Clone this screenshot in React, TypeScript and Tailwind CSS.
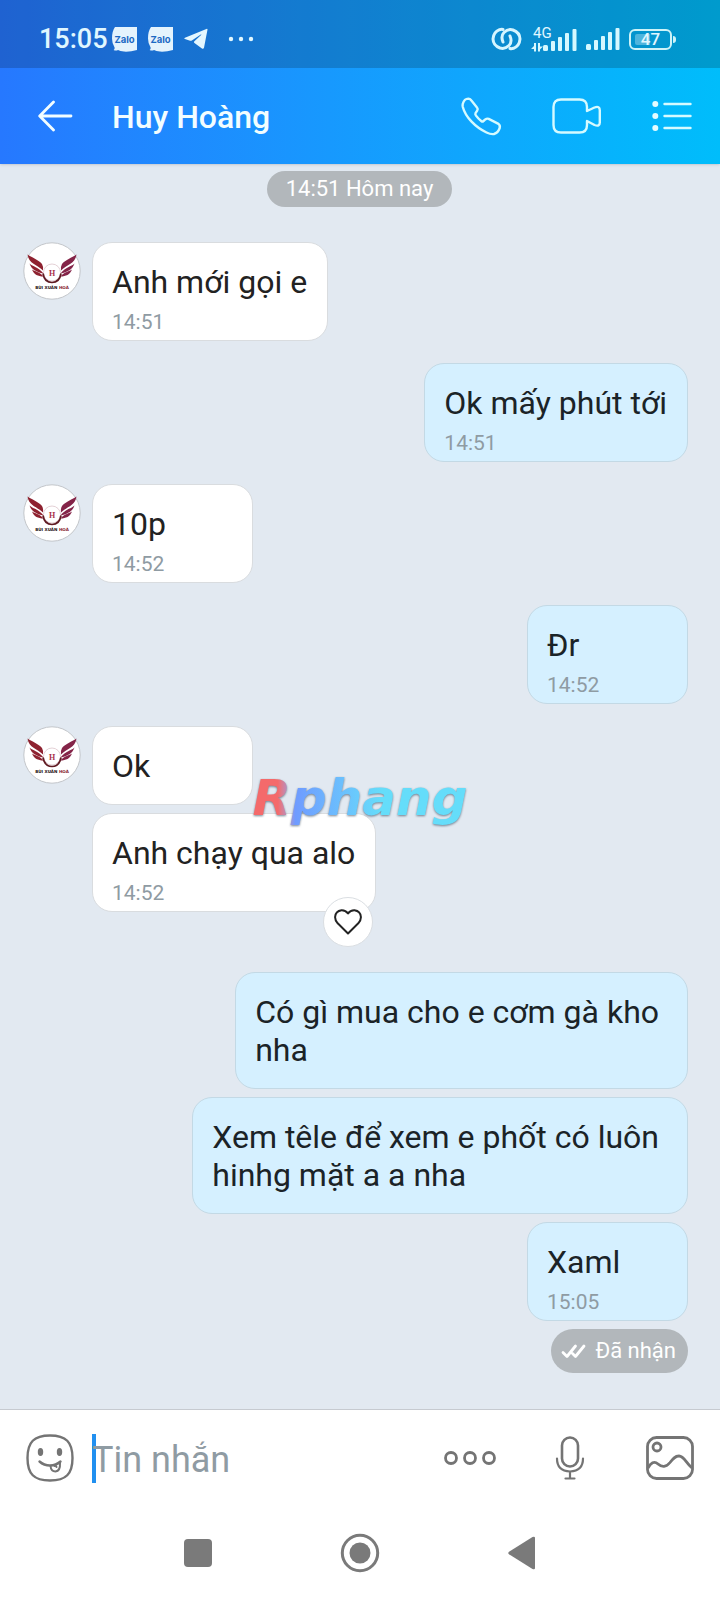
import type { ReactNode } from 'react';
import clsx from 'clsx';

type Message = {
  lines: string[];
  time?: string;
  liked?: boolean;
};

type Group = {
  from: 'them' | 'me';
  messages: Message[];
};

const groups: Group[] = [
  { from: 'them', messages: [{ lines: ['Anh mới gọi e'], time: '14:51' }] },
  { from: 'me', messages: [{ lines: ['Ok mấy phút tới'], time: '14:51' }] },
  { from: 'them', messages: [{ lines: ['10p'], time: '14:52' }] },
  { from: 'me', messages: [{ lines: ['Đr'], time: '14:52' }] },
  { from: 'them', messages: [{ lines: ['Ok'] }, { lines: ['Anh chạy qua alo'], time: '14:52', liked: true }] },
  {
    from: 'me',
    messages: [
      { lines: ['Có gì mua cho e cơm gà kho', 'nha'] },
      { lines: ['Xem têle để xem e phốt có luôn', 'hinhg mặt a a nha'] },
      { lines: ['Xaml'], time: '15:05' },
    ],
  },
];

function ZaloIcon() {
  return (
    <svg width="25" height="25" viewBox="0 0 25 25" aria-hidden="true">
      <path d="M3 0H25V23Q18 25 12 24.6Q8 24.3 6 23Q4 24 1.6 23Q3 22 2.6 20.4Q0 16.500 0 11.500Q0 4 3 0Z" fill="#e4f3fd" />
      <text x="12.500" y="15.500" textAnchor="middle" fontFamily="Inter, sans-serif" fontWeight="700" fontSize="9.500" fill="#1c69c4">
        Zalo
      </text>
    </svg>
  );
}

function TelegramIcon() {
  return (
    <svg width="24" height="22" viewBox="0 0 25 22" fill="#e4f7ff" aria-hidden="true">
      <path d="M24.500 1.200Q24.600 0 23.300 0.500L1 9.600Q-0.500 10.400 1 11.100L6.300 12.800Q7.300 13.100 8.200 12.500L17.500 6.300Q18.600 6 17.800 6.900L10.800 13.300Q9.800 14.300 10.900 15.100L18.700 20.900Q20.400 21.700 20.900 19.900Z" />
    </svg>
  );
}

function LinkIcon() {
  return (
    <svg width="31" height="24" viewBox="0 0 31 24" fill="none" stroke="#d5f5ff" strokeWidth="3" strokeLinecap="round" aria-hidden="true">
      <path d="M12 15Q9.500 9 13 5.500Q17 1.500 22 3Q28.800 5.500 29 12Q28.500 19 22.500 21.300Q20.500 21.900 19 21.500" />
      <path d="M19 9Q21.500 15 18 18.500Q14 22.500 9 21Q2.200 18.500 2 12Q2.500 5 8.500 2.700Q10.500 2.100 12 2.500" />
    </svg>
  );
}

function SignalBars() {
  return (
    <svg width="34" height="24" viewBox="0 0 34 24" fill="#d5f8ff" aria-hidden="true">
      <rect x="0" y="17" width="5" height="6" rx="1.500" />
      <rect x="8" y="13" width="4" height="10" rx="1" />
      <rect x="15" y="9" width="4" height="14" rx="1" />
      <rect x="22" y="5" width="4" height="18" rx="1" />
      <rect x="29.500" y="1" width="4" height="22" rx="1" />
    </svg>
  );
}

function MobileData() {
  return (
    <div className="flex items-end">
      <div className="-mr-2 flex w-5 flex-col self-stretch">
        <span className="pl-[2px] text-[15px] leading-[12px]">4G</span>
        <svg className="mt-1" width="12" height="9" viewBox="0 0 12 9" fill="#d5f8ff" aria-hidden="true">
          <path d="M5 0V8.500H3V6H0L3 3V0ZM7 0H9V3.500H12L9 6.500V8.500H7Z" />
        </svg>
      </div>
      <SignalBars />
    </div>
  );
}

function Battery() {
  return (
    <div className="flex items-center gap-px">
      <div className="relative flex h-[21px] w-[43px] items-center justify-center rounded-[6px] border-2 border-[#cdf3f8]">
        <span className="absolute inset-y-[3px] left-[4px] w-[15px] rounded-l-[2px] bg-white/30" />
        <span className="relative text-[17px] font-medium leading-none">47</span>
      </div>
      <span className="h-[7px] w-[3px] rounded-r-sm bg-[#cdf3f8]" />
    </div>
  );
}

function StatusBar() {
  return (
    <div className="flex h-[68px] items-center justify-between bg-black/18 pl-[39px] pr-11 pt-[10px] text-[#e0f7ff]">
      <div className="flex items-center">
        <span className="text-[27px] font-medium leading-none">15:05</span>
        <div className="ml-1 flex items-center gap-[11px]">
          <ZaloIcon />
          <ZaloIcon />
          <TelegramIcon />
        </div>
        <svg className="ml-5" width="26" height="6" viewBox="0 0 26 6" fill="currentColor" aria-hidden="true">
          <circle cx="3" cy="3" r="2.200" />
          <circle cx="13" cy="3" r="2.200" />
          <circle cx="23" cy="3" r="2.200" />
        </svg>
      </div>
      <div className="flex items-center gap-[9px]">
        <LinkIcon />
        <MobileData />
        <SignalBars />
        <Battery />
      </div>
    </div>
  );
}

function ChatHeader() {
  return (
    <div className="flex h-24 items-center pl-[38px] pr-7 text-[#f2fdff]">
      <button type="button" aria-label="Quay lại">
        <svg width="35" height="32" viewBox="0 0 35 32" fill="none" stroke="currentColor" strokeWidth="2.800" strokeLinecap="round" strokeLinejoin="round">
          <path d="M33 16H2M15.500 2L1.700 16L15.500 30" />
        </svg>
      </button>
      <h1 className="ml-[39px] flex-1 pt-[2px] text-[32px] font-medium leading-[38px]">Huy Hoàng</h1>
      <div className="flex items-center gap-[50px]">
        <button type="button" aria-label="Gọi thoại">
          <svg width="41" height="39" viewBox="0 0 41 39" fill="none" stroke="#d5faff" strokeWidth="2.400" strokeLinejoin="round">
            <path d="M1.800 6.800C2.800 3.200 5 1.600 7.300 1.600Q9 1.700 10.200 3.300L16 10.500Q17.300 12 16.200 13.600L14.500 16.200Q14 17.200 15 18.600Q17.500 22 20.500 24.200Q21.500 24.900 22.500 24L24.300 22.400Q26 21.200 27.700 21.900L37 26.600Q39.500 28.200 38.700 31Q37 35.800 33 37Q30 37.600 25.500 35.500C14 30 4.500 20 1.800 10Q1.400 8.300 1.800 6.800Z" />
          </svg>
        </button>
        <button type="button" aria-label="Gọi video">
          <svg width="50" height="36" viewBox="0 0 50 36" fill="none" stroke="#d5faff" strokeWidth="2.400" strokeLinejoin="round">
            <path d="M35 13V9Q35 1.500 27.500 1.500H9Q1.500 1.500 1.500 9V27Q1.500 34.500 9 34.500H27.500Q35 34.500 35 27V23L42.500 27Q47.800 29 47.800 24.500V12.500Q47.800 7.500 42.500 9.500Z" />
          </svg>
        </button>
        <button type="button" aria-label="Tùy chọn">
          <svg width="40" height="32" viewBox="0 0 40 32" fill="none" stroke="#d5faff" strokeWidth="2.400" strokeLinecap="round">
            <path d="M12.500 4H38.500M12.500 16H38.500M12.500 28H38.500" />
            <g fill="#e4fcff" stroke="none">
              <circle cx="3.300" cy="4" r="3" />
              <circle cx="3.300" cy="16" r="3" />
              <circle cx="3.300" cy="28" r="3" />
            </g>
          </svg>
        </button>
      </div>
    </div>
  );
}

function Wing() {
  return (
    <>
      <path d="M4.500 12.500C8 15 16 18 19 22Q20.500 24.500 20 28.500C14 22.500 6 22 4.500 12.500Z" />
      <path d="M6.500 21.500C10 25 15 24.500 20.500 31.500C13.500 30 8.500 27.500 6.500 21.500Z" />
      <path d="M9 27.500C12 29.500 16 29.500 20.500 34.500C15 34.500 11 32.500 9 27.500Z" />
    </>
  );
}

function Avatar() {
  return (
    <svg className="shrink-0" width="58" height="58" viewBox="0 0 58 58" role="img" aria-label="Bùi Xuân Hoà">
      <circle cx="29" cy="29" r="28.200" fill="#fff" stroke="#c3c6ca" />
      <g fill="#8e2230">
        <Wing />
      </g>
      <g fill="#842448" transform="translate(58 0) scale(-1 1)">
        <Wing />
      </g>
      <circle cx="29" cy="30.500" r="8.500" fill="#fff" stroke="#ddc5cb" strokeWidth="0.800" />
      <path d="M20 31.500Q21.500 40.500 29 40.500Q36.500 40.500 38 31.500" fill="none" stroke="#5f1a22" strokeWidth="1.700" />
      <text x="29" y="33.500" textAnchor="middle" fontFamily="Liberation Serif, serif" fontWeight="700" fontSize="8" fill="#a8324c">
        H
      </text>
      <text x="29" y="46.500" textAnchor="middle" fontFamily="DejaVu Sans, sans-serif" fontWeight="700" fontSize="4.100" fill="#1d1012">
        BÙI XUÂN <tspan fill="#85202c">HOÀ</tspan>
      </text>
    </svg>
  );
}

function Bubble({ message, mine }: { message: Message; mine: boolean }) {
  const { lines, time, liked } = message;

  return (
    <article
      className={clsx(
        'relative min-w-[161px] rounded-[20px] border pl-[19px] pt-5',
        mine ? 'border-[#c3d9e5] bg-[#d5f0ff] text-[#1b2327]' : 'border-[#d9dcdf] bg-white text-[#222222]',
        time ? 'pb-[5px]' : 'pb-[19px]',
        lines.length > 1 ? 'pr-7' : 'pr-5',
      )}
    >
      <p className="text-[32px] leading-[38px]">
        {lines.map((line) => (
          <span key={line} className="block">{line}</span>
        ))}
      </p>
      {time && <time className="mt-2 block text-[21px] leading-[26px] text-[#8f9ba3]">{time}</time>}
      {liked && (
        <button
          type="button"
          aria-label="Thả tim"
          className="absolute -bottom-9 right-[2px] flex size-[50px] items-center justify-center rounded-full border border-[#dadee2] bg-white"
        >
          <svg width="28" height="26" viewBox="0 0 28 26" fill="none" stroke="#222" strokeWidth="2" strokeLinejoin="round">
            <path d="M14 24.500L3.700 14.300Q1 11.300 1.100 8Q1.500 2 7.500 1.200Q11.500 1 14 4.500Q16.500 1 20.500 1.200Q26.500 2 26.900 8Q27 11.300 24.300 14.300Z" />
          </svg>
        </button>
      )}
    </article>
  );
}

function MessageGroup({ group }: { group: Group }) {
  const mine = group.from === 'me';
  const liked = group.messages.some((message) => message.liked);

  return (
    <section className={clsx('flex gap-[11px]', mine && 'justify-end', liked && 'mb-[38px]')}>
      {!mine && <Avatar />}
      <div className={clsx('flex flex-col gap-2', mine ? 'items-end' : 'items-start')}>
        {group.messages.map((message) => (
          <Bubble key={message.lines[0]} message={message} mine={mine} />
        ))}
      </div>
    </section>
  );
}

function ToolButton({ label, children }: { label: string; children: ReactNode }) {
  return (
    <button type="button" aria-label={label} className="shrink-0 text-[#747474]">
      {children}
    </button>
  );
}

function Composer() {
  return (
    <form className="flex h-[97px] items-center border-t border-[#c6cad0] bg-white px-[26px]">
      <ToolButton label="Biểu cảm">
        <svg width="48" height="48" viewBox="0 0 48 48" fill="none" stroke="currentColor" strokeWidth="2.400" strokeLinecap="round">
          <path d="M24 1.500C40 1.500 46.500 8 46.500 24S40 46.500 24 46.500S1.500 40 1.500 24S8 1.500 24 1.500Z" />
          <path d="M13.500 27.500Q18 31.500 24 31.500Q30 31.500 34.500 27.500" />
          <path d="M24.500 32Q25 37.500 29.500 37.500Q34.500 37 34 29M28.500 32Q30 31.500 30.500 33" strokeWidth="2" />
          <g fill="currentColor" stroke="none">
            <ellipse cx="14.500" cy="18" rx="2.700" ry="4" />
            <ellipse cx="33.500" cy="18" rx="2.700" ry="4" />
          </g>
        </svg>
      </ToolButton>
      <div className="relative ml-[18px] flex-1">
        <span className="absolute inset-y-0 left-0 w-1 bg-[#2190f0]" />
        <input
          type="text"
          aria-label="Tin nhắn"
          placeholder="Tin nhắn"
          className="relative block h-[49px] w-full bg-transparent pt-1 text-[36px] text-[#222222] outline-none placeholder:text-[#8f9ba3]"
        />
      </div>
      <div className="flex items-center">
        <ToolButton label="Thêm">
          <svg width="52" height="14" viewBox="0 0 52 14" fill="none" stroke="currentColor" strokeWidth="2.800">
            <circle cx="7" cy="7" r="5.500" />
            <circle cx="26" cy="7" r="5.500" />
            <circle cx="45" cy="7" r="5.500" />
          </svg>
        </ToolButton>
        <div className="ml-[59px] flex items-center gap-[61px]">
          <ToolButton label="Ghi âm">
            <svg width="30" height="44" viewBox="0 0 30 44" fill="none" stroke="currentColor" strokeWidth="2.600" strokeLinecap="round">
              <rect x="7" y="1.500" width="16" height="29" rx="8" />
              <path d="M2 22.500Q2 35 15 35.500Q28 35 28 22.500M15 35.500V42.500M10.500 42.500H19.500" strokeWidth="2.200" />
            </svg>
          </ToolButton>
          <ToolButton label="Hình ảnh">
            <svg width="48" height="44" viewBox="0 0 48 44" fill="none" stroke="currentColor" strokeWidth="2.800">
              <rect x="1.500" y="1.500" width="45" height="41" rx="9" />
              <circle cx="11" cy="11" r="4" />
              <path d="M2 32C5 27 8 24.500 12 28S20 31.500 24 26.500C27 22.500 29 20 33 20C38 20 40 27 46 32" />
            </svg>
          </ToolButton>
        </div>
      </div>
    </form>
  );
}

function SystemNav() {
  return (
    <nav className="flex h-[94px] items-center justify-center gap-[122px] bg-white text-[#7a7a7a]">
      <button type="button" aria-label="Gần đây" className="flex size-10 items-center justify-center">
        <span className="size-7 rounded-[4px] bg-[#7a7a7a]" />
      </button>
      <button type="button" aria-label="Trang chủ" className="size-10">
        <svg width="40" height="40" viewBox="0 0 40 40">
          <circle cx="20" cy="20" r="17.700" fill="none" stroke="currentColor" strokeWidth="3" />
          <circle cx="20" cy="20" r="10.500" fill="currentColor" />
        </svg>
      </button>
      <button type="button" aria-label="Trở về" className="size-10">
        <svg width="40" height="40" viewBox="0 0 40 40" fill="currentColor">
          <path d="M7 18.700L30.500 4Q33 3 33 5V35Q33 37 30.500 36L7 21.300Q5.500 20 7 18.700Z" />
        </svg>
      </button>
    </nav>
  );
}

export default function App() {
  return (
    <div className="relative flex min-h-screen flex-col bg-[#e2e9f1] font-['Roboto',sans-serif]">
      <header className="bg-linear-to-r from-[#2678ff] to-[#00bdfb] shadow-sm">
        <StatusBar />
        <ChatHeader />
      </header>

      <main className="flex flex-1 flex-col pb-9 pl-[23px] pr-8 pt-[7px]">
        <div className="mb-[35px] ml-2 self-center rounded-full bg-[#b2b7bb] px-[19px] text-[22px] leading-[36px] text-white">
          14:51 Hôm nay
        </div>
        <div className="flex flex-col gap-[22px]">
          {groups.map((group, index) => (
            <MessageGroup key={index} group={group} />
          ))}
        </div>
        <div className="mt-2 flex h-11 items-center gap-[9px] self-end rounded-full bg-[#b2b7bb] pl-[10px] pr-3 text-[22px] leading-[26px] text-white">
          <svg width="25" height="15" viewBox="0 0 25 15" fill="none" stroke="currentColor" strokeWidth="2.800" strokeLinecap="round" strokeLinejoin="round">
            <path d="M2 8.500L6 12.500L14.500 2M11.500 9.500L14.500 12.500L23 2" />
          </svg>
          Đã nhận
        </div>
      </main>

      <Composer />
      <SystemNav />

      <div className="pointer-events-none absolute inset-0 flex items-center justify-center pb-1">
        <span className="bg-linear-to-r from-[#f46a6b] from-12% via-[#6f9bff] via-20% to-[#65ddfa] to-60% bg-clip-text font-['DejaVu_Sans',sans-serif] text-[50px] font-bold italic leading-[60px] text-transparent drop-shadow-[0_1px_1px_rgba(60,80,100,0.7)]">
          Rphang
        </span>
      </div>
    </div>
  );
}
